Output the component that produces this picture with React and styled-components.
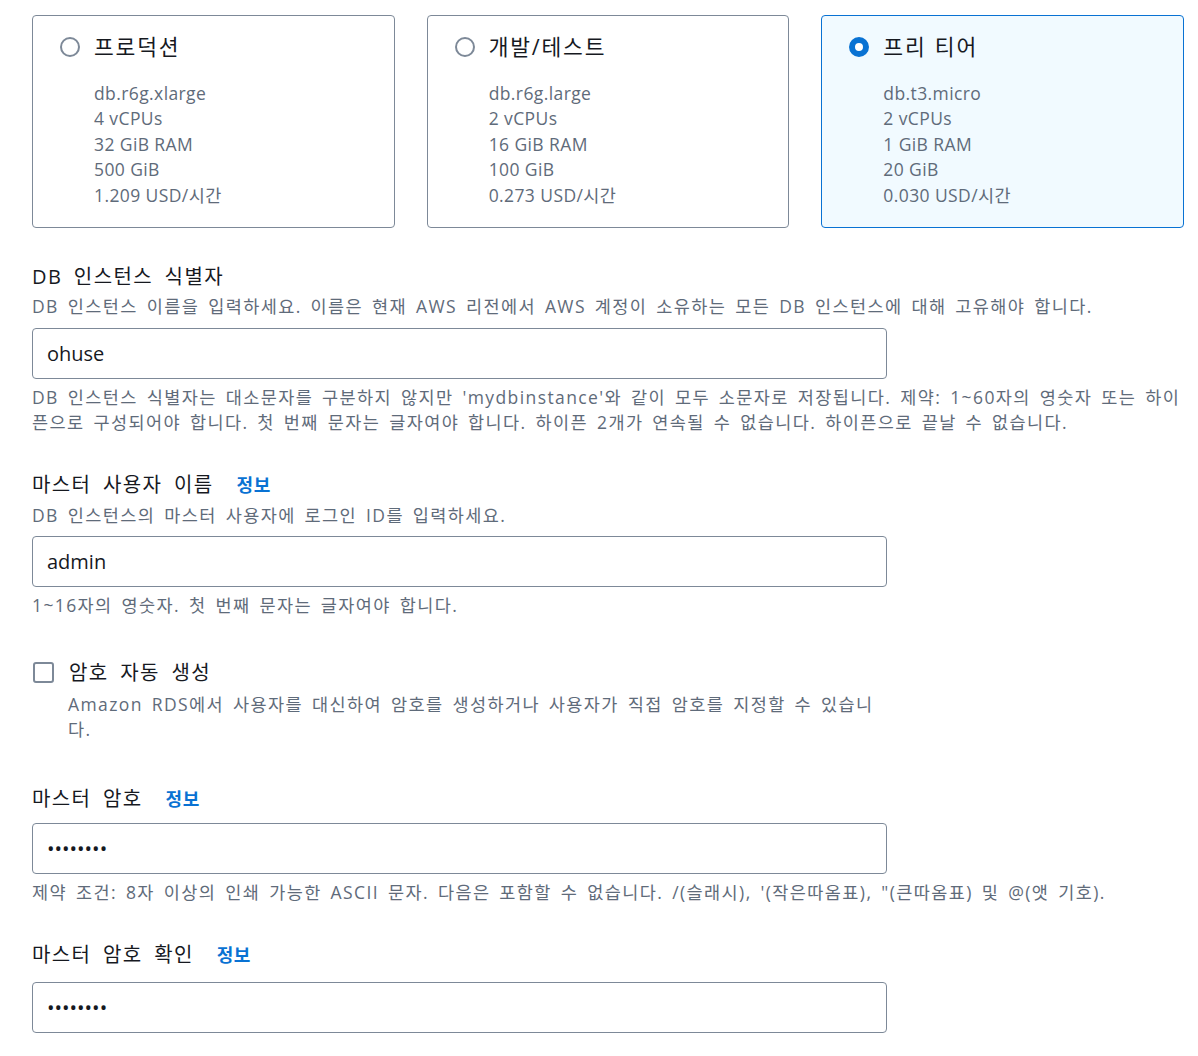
import React, { useState } from "react";
import styled, { createGlobalStyle } from "styled-components";

const COLORS = {
  TEXT: "#16191f",
  MUTED: "#5f6b7a",
  BORDER: "#7d8998",
  BLUE: "#0972d3",
  SELECTED_BG: "#f1faff",
  WHITE: "#ffffff",
};

const GlobalStyle = createGlobalStyle`
  html, body {
    margin: 0;
    padding: 0;
    background: ${COLORS.WHITE};
  }
  body {
    font-family: "Open Sans", "Noto Sans CJK KR", sans-serif;
    color: ${COLORS.TEXT};
  }
  * { box-sizing: border-box; }
`;

const TIERS = [
  {
    id: "prod",
    title: "프로덕션",
    specs: ["db.r6g.xlarge", "4 vCPUs", "32 GiB RAM", "500 GiB", "1.209 USD/시간"],
  },
  {
    id: "dev",
    title: "개발/테스트",
    specs: ["db.r6g.large", "2 vCPUs", "16 GiB RAM", "100 GiB", "0.273 USD/시간"],
  },
  {
    id: "free",
    title: "프리 티어",
    specs: ["db.t3.micro", "2 vCPUs", "1 GiB RAM", "20 GiB", "0.030 USD/시간"],
  },
];

function App() {
  const [tier, setTier] = useState("free");
  const [identifier, setIdentifier] = useState("ohuse");
  const [username, setUsername] = useState("admin");
  const [autoPassword, setAutoPassword] = useState(false);
  const [password, setPassword] = useState("password");
  const [confirm, setConfirm] = useState("password");

  return (
    <>
      <GlobalStyle />
      <Page>
        <TierGrid>
          {TIERS.map((t) => (
            <TierCard
              key={t.id}
              $selected={tier === t.id}
              onClick={() => setTier(t.id)}
            >
              <CardHead>
                <Radio $checked={tier === t.id} />
                <span>{t.title}</span>
              </CardHead>
              <Specs>
                {t.specs.map((s) => (
                  <div key={s}>{s}</div>
                ))}
              </Specs>
            </TierCard>
          ))}
        </TierGrid>

        <Field $gap={31}>
          <Label>DB 인스턴스 식별자</Label>
          <Description>
            DB 인스턴스 이름을 입력하세요. 이름은 현재 AWS 리전에서 AWS 계정이 소유하는 모든 DB 인스턴스에 대해 고유해야 합니다.
          </Description>
          <Input
            value={identifier}
            onChange={(e) => setIdentifier(e.target.value)}
          />
          <Hint>
            DB 인스턴스 식별자는 대소문자를 구분하지 않지만 'mydbinstance'와 같이 모두 소문자로 저장됩니다. 제약: 1~60자의 영숫자 또는 하이픈으로 구성되어야 합니다. 첫 번째 문자는 글자여야 합니다. 하이픈 2개가 연속될 수 없습니다. 하이픈으로 끝날 수 없습니다.
          </Hint>
        </Field>

        <Field $gap={32}>
          <Label>
            <span>마스터 사용자 이름</span>
            <InfoLink>정보</InfoLink>
          </Label>
          <Description>DB 인스턴스의 마스터 사용자에 로그인 ID를 입력하세요.</Description>
          <Input value={username} onChange={(e) => setUsername(e.target.value)} />
          <Hint>1~16자의 영숫자. 첫 번째 문자는 글자여야 합니다.</Hint>
        </Field>

        <CheckField onClick={() => setAutoPassword(!autoPassword)}>
          <CheckRow>
            <CheckBox $checked={autoPassword} />
            <Label as="span">암호 자동 생성</Label>
          </CheckRow>
          <CheckDescription>
            Amazon RDS에서 사용자를 대신하여 암호를 생성하거나 사용자가 직접 암호를 지정할 수 있습니다.
          </CheckDescription>
        </CheckField>

        <Field $gap={33}>
          <Label>
            <span>마스터 암호</span>
            <InfoLink>정보</InfoLink>
          </Label>
          <Input
            $compact
            type="password"
            value={password}
            onChange={(e) => setPassword(e.target.value)}
          />
          <Hint>
            제약 조건: 8자 이상의 인쇄 가능한 ASCII 문자. 다음은 포함할 수 없습니다. /(슬래시), '(작은따옴표), "(큰따옴표) 및 @(앳 기호).
          </Hint>
        </Field>

        <Field $gap={32}>
          <Label>
            <span>마스터 암호 확인</span>
            <InfoLink>정보</InfoLink>
          </Label>
          <Input
            type="password"
            value={confirm}
            onChange={(e) => setConfirm(e.target.value)}
          />
        </Field>
      </Page>
    </>
  );
}

const Page = styled.div`
  padding: 15px 14px 30px 32px;
`;

const TierGrid = styled.div`
  display: grid;
  grid-template-columns: repeat(3, 1fr);
  gap: 32px;
`;

const TierCard = styled.div`
  display: flex;
  flex-direction: column;
  height: 213px;
  padding: 16px 20px 0 27px;
  border: 1px solid ${(p) => (p.$selected ? COLORS.BLUE : COLORS.BORDER)};
  border-radius: 4px;
  background: ${(p) => (p.$selected ? COLORS.SELECTED_BG : COLORS.WHITE)};
  cursor: pointer;
`;

const CardHead = styled.div`
  display: flex;
  align-items: center;
  gap: 14px;
  font-size: 21.5px;
  line-height: 30px;
  letter-spacing: 1.8px;
  word-spacing: 1px;
  color: ${COLORS.TEXT};
`;

const Radio = styled.span`
  width: 20px;
  height: 20px;
  flex: none;
  border-radius: 50%;
  background: ${COLORS.WHITE};
  border: ${(p) => (p.$checked ? `6px solid ${COLORS.BLUE}` : `2px solid ${COLORS.BORDER}`)};
`;

const Specs = styled.div`
  margin: 19px 0 0 34px;
  font-size: 17.5px;
  line-height: 25.4px;
  letter-spacing: 0.4px;
  color: ${COLORS.MUTED};
`;

const Field = styled.div`
  display: flex;
  flex-direction: column;
  margin-top: ${(p) => p.$gap}px;
`;

const Label = styled.div`
  display: flex;
  align-items: baseline;
  gap: 23px;
  font-size: 20px;
  line-height: 35px;
  letter-spacing: 1.4px;
  word-spacing: 5px;
  color: ${COLORS.TEXT};
`;

const InfoLink = styled.a`
  font-size: 18px;
  font-weight: 700;
  letter-spacing: 0.5px;
  word-spacing: 0;
  color: ${COLORS.BLUE};
  text-decoration: none;
  cursor: pointer;
`;

const Description = styled.div`
  font-size: 17.5px;
  line-height: 25px;
  letter-spacing: 1.4px;
  word-spacing: 3px;
  color: ${COLORS.MUTED};
`;

const Hint = styled(Description)`
  margin-top: 6px;
`;

const Input = styled.input`
  width: 855px;
  height: 51px;
  margin-top: ${(p) => (p.$compact ? 6 : 8.5)}px;
  padding: 0 14px;
  border: 1px solid ${COLORS.BORDER};
  border-radius: 4px;
  font-family: inherit;
  font-size: 20px;
  color: ${COLORS.TEXT};
  background: ${COLORS.WHITE};
  outline: none;
`;

const CheckField = styled.div`
  max-width: 855px;
  margin-top: 37px;
  cursor: pointer;
`;

const CheckRow = styled.div`
  display: flex;
  align-items: center;
  gap: 15px;
`;

const CheckBox = styled.span`
  width: 21px;
  height: 21px;
  flex: none;
  margin-left: 1px;
  border: 2px solid ${COLORS.BORDER};
  border-radius: 3px;
  background: ${(p) => (p.$checked ? COLORS.BLUE : COLORS.WHITE)};
`;

const CheckDescription = styled(Description)`
  margin: 2px 0 0 36px;
  padding-bottom: 6px;
`;

export default App;
